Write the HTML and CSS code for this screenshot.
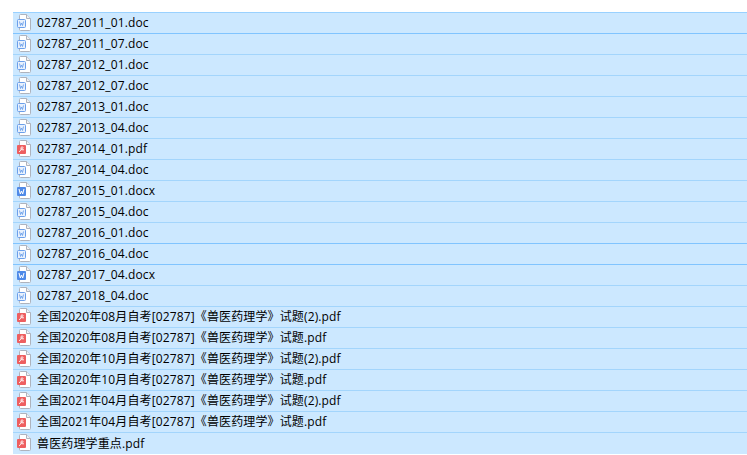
FILE: index.html
```html
<!DOCTYPE html>
<html lang="zh-CN">
<head>
<meta charset="utf-8">
<title>02787</title>
<link rel="stylesheet" href="styles.css">
</head>
<body>
<svg class="defs" width="0" height="0" aria-hidden="true">
  <symbol id="page" viewBox="0 0 14 17">
    <path d="M2.5 1.5Q2.5.5 3.5.5H9.5L13.5 4.5V15.5Q13.5 16.5 12.5 16.5H3.5Q2.5 16.5 2.5 15.5Z" fill="#fff" stroke="#aeb3bd"/>
    <path d="M9.5.5V4.5H13.5" fill="#eef0f4" stroke="#aeb3bd"/>
  </symbol>
  <symbol id="doc" viewBox="0 0 14 17">
    <use href="#page"/>
    <rect x=".5" y="5.5" width="8" height="8" rx="1" fill="#e8f1fd" stroke="#6b9fea"/>
    <path d="M2.5 7.5L3.5 11.5L4.5 9L5.5 11.5L6.5 7.5" fill="none" stroke="#6b9fea" stroke-width=".9"/>
  </symbol>
  <symbol id="docx" viewBox="0 0 14 17">
    <use href="#page"/>
    <rect y="5" width="9" height="9" rx="1" fill="#4f8ae8"/>
    <path d="M2 7L3.3 12L4.5 9L5.7 12L7 7" fill="none" stroke="#fff"/>
  </symbol>
  <symbol id="pdf" viewBox="0 0 14 17">
    <use href="#page"/>
    <rect y="5" width="9" height="9" rx="1" fill="#ee5f60"/>
    <path d="M2.2 12L4.2 9.5L4.2 7.6C4.2 6.5 5.8 6.5 6 7.6C6.2 9 4.5 9.5 3.5 9M4.5 9.8H7" fill="none" stroke="#fff" stroke-width=".9"/>
  </symbol>
</svg>
<ul class="files">
  <li class="file file-seam"><svg class="icon"><use href="#doc"/></svg><span>02787_2011_01.doc</span></li>
  <li class="file"><svg class="icon"><use href="#doc"/></svg><span>02787_2011_07.doc</span></li>
  <li class="file"><svg class="icon"><use href="#doc"/></svg><span>02787_2012_01.doc</span></li>
  <li class="file"><svg class="icon"><use href="#doc"/></svg><span>02787_2012_07.doc</span></li>
  <li class="file"><svg class="icon"><use href="#doc"/></svg><span>02787_2013_01.doc</span></li>
  <li class="file"><svg class="icon"><use href="#doc"/></svg><span>02787_2013_04.doc</span></li>
  <li class="file"><svg class="icon"><use href="#pdf"/></svg><span>02787_2014_01.pdf</span></li>
  <li class="file"><svg class="icon"><use href="#doc"/></svg><span>02787_2014_04.doc</span></li>
  <li class="file"><svg class="icon"><use href="#docx"/></svg><span>02787_2015_01.docx</span></li>
  <li class="file"><svg class="icon"><use href="#doc"/></svg><span>02787_2015_04.doc</span></li>
  <li class="file file-seam"><svg class="icon"><use href="#doc"/></svg><span>02787_2016_01.doc</span></li>
  <li class="file file-seam"><svg class="icon"><use href="#doc"/></svg><span>02787_2016_04.doc</span></li>
  <li class="file"><svg class="icon"><use href="#docx"/></svg><span>02787_2017_04.docx</span></li>
  <li class="file"><svg class="icon"><use href="#doc"/></svg><span>02787_2018_04.doc</span></li>
  <li class="file"><svg class="icon"><use href="#pdf"/></svg><span>全国2020年08月自考[02787]《兽医药理学》试题(2).pdf</span></li>
  <li class="file"><svg class="icon"><use href="#pdf"/></svg><span>全国2020年08月自考[02787]《兽医药理学》试题.pdf</span></li>
  <li class="file"><svg class="icon"><use href="#pdf"/></svg><span>全国2020年10月自考[02787]《兽医药理学》试题(2).pdf</span></li>
  <li class="file"><svg class="icon"><use href="#pdf"/></svg><span>全国2020年10月自考[02787]《兽医药理学》试题.pdf</span></li>
  <li class="file"><svg class="icon"><use href="#pdf"/></svg><span>全国2021年04月自考[02787]《兽医药理学》试题(2).pdf</span></li>
  <li class="file"><svg class="icon"><use href="#pdf"/></svg><span>全国2021年04月自考[02787]《兽医药理学》试题.pdf</span></li>
  <li class="file"><svg class="icon"><use href="#pdf"/></svg><span>兽医药理学重点.pdf</span></li>
</ul>
</body>
</html>
```
FILE: styles.css
```css
html, body {
  margin: 0;
  background: #fff;
}
body {
  padding: 12px 0 0 13px;
  overflow: hidden;
  font-family: "Open Sans", "Noto Sans CJK SC", sans-serif;
  font-size: 12px;
  letter-spacing: .13px;
  color: #000;
}
.defs {
  display: block;
  height: 0;
}
.files {
  list-style: none;
  margin: 0;
  padding: 0;
  border-top: 1px solid #99d1ff;
}
.file {
  display: flex;
  align-items: center;
  gap: 6px;
  box-sizing: border-box;
  height: 21px;
  padding: 0 0 2px 4px;
  background: #cce8ff;
  border-bottom: 1px solid #a3d5fc;
}
.file-seam {
  border-bottom-color: #80c4ff;
}
.file:last-child {
  border-bottom: 0;
}
.icon {
  width: 14px;
  height: 17px;
  flex: none;
}
```
